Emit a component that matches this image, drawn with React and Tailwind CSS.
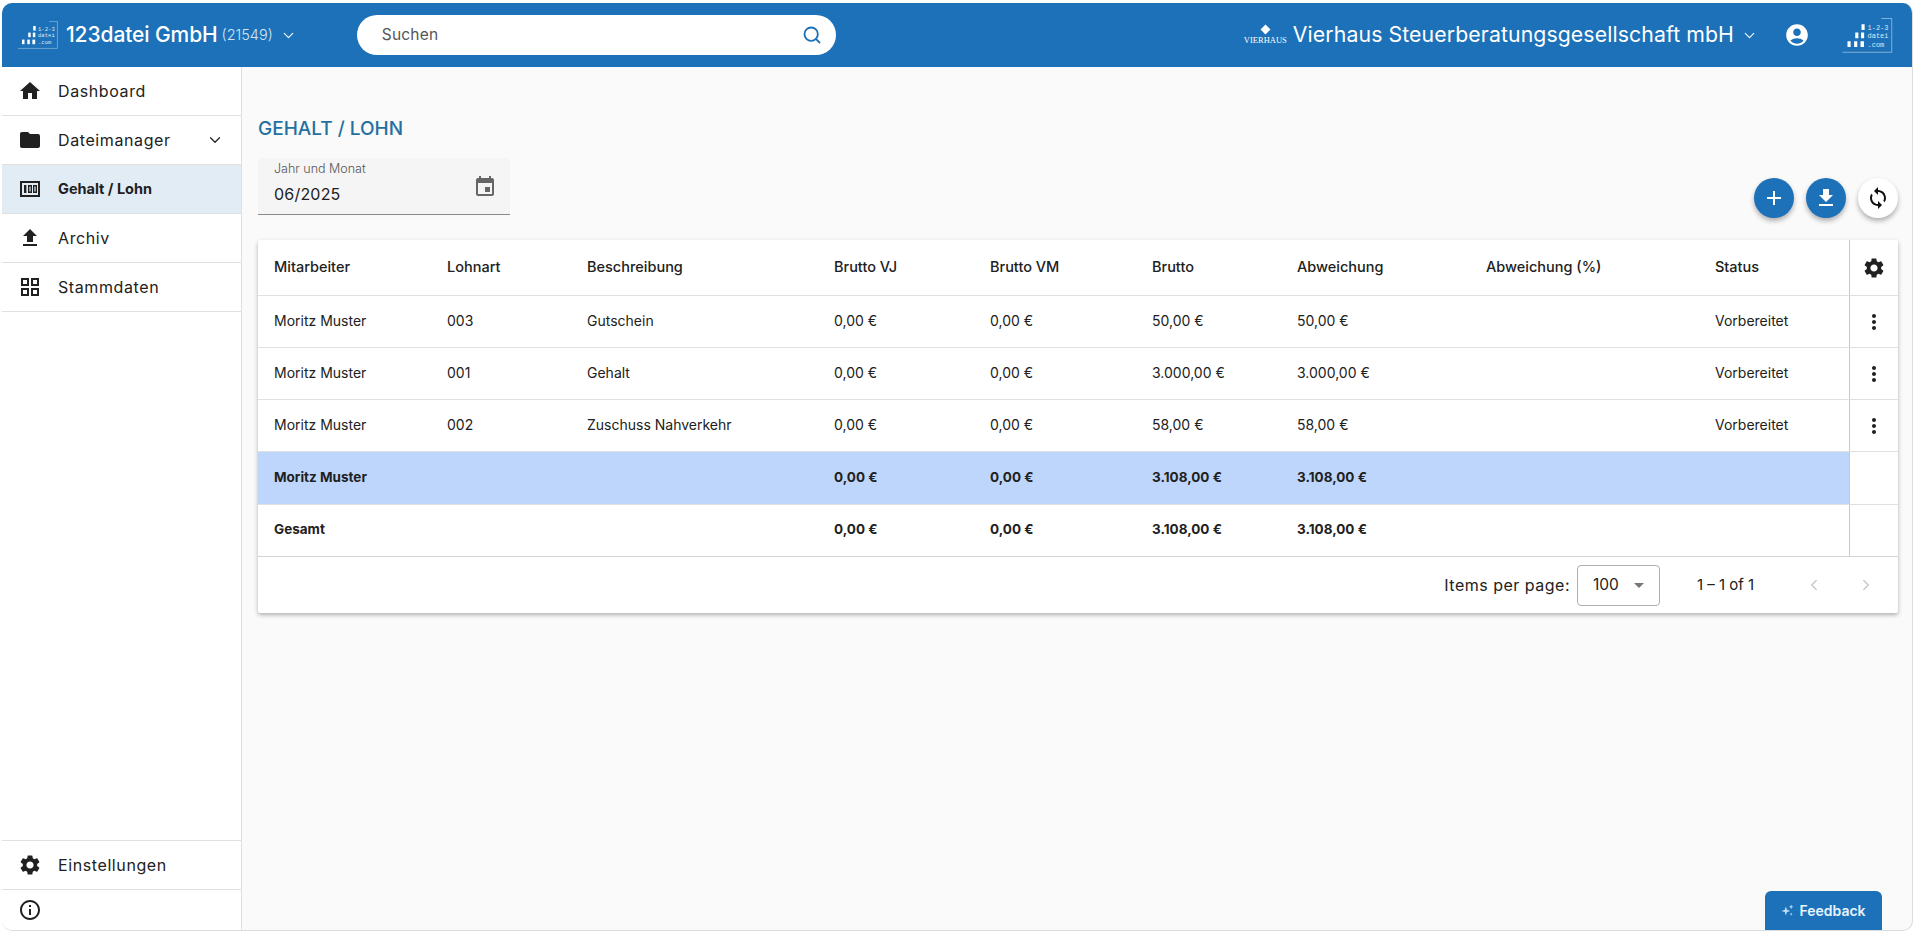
import React from "react";
import { MdHome, MdFolder, MdFileUpload, MdGridView, MdSettings, MdInfoOutline, MdAccountCircle, MdEvent, MdAdd, MdFileDownload, MdSync, MdMoreVert, MdArrowDropDown } from "react-icons/md";
import { ChevronDown, ChevronLeft, ChevronRight, Search } from "lucide-react";

const GRID = "grid grid-cols-[173px_140px_247px_156px_162px_145px_189px_229px_150px_49px]";

function Logo({ className }) {
  return (
    <svg viewBox="0 0 40 28" className={className} fill="#fff">
      <path d="M31 0.4 H39.4 V27.4 H0" fill="none" stroke="#fff" strokeOpacity="0.6" strokeWidth="0.6" />
      <rect x="15.2" y="5" width="2.5" height="4.6" />
      <rect x="10.2" y="11.6" width="2.5" height="4.6" />
      <rect x="14.8" y="11.6" width="2.5" height="4.6" />
      <rect x="4" y="18.6" width="2.5" height="4.6" />
      <rect x="9.3" y="18.6" width="2.5" height="4.6" />
      <rect x="14.4" y="18.6" width="2.8" height="4.6" />
      <text x="20" y="9.6" fontSize="5.6" fillOpacity="0.85" fontFamily="Liberation Mono, monospace">1-2-3</text>
      <text x="20" y="16.2" fontSize="5.6" fillOpacity="0.85" fontFamily="Liberation Mono, monospace">datei</text>
      <text x="20" y="23.2" fontSize="5.6" fillOpacity="0.85" fontFamily="Liberation Mono, monospace">.com</text>
    </svg>
  );
}

function PayIcon({ className }) {
  return (
    <svg viewBox="0 0 24 24" className={className} fill="currentColor">
      <path fillRule="evenodd" d="M2 4 H22 V20 H2 Z M4 6 V18 H20 V6 Z" />
      <rect x="6" y="8" width="2.4" height="8" />
      <path fillRule="evenodd" d="M10 8 H14 V16 H10 Z M11.4 9.6 V14.4 H12.6 V9.6 Z" />
      <path fillRule="evenodd" d="M15 8 H19 V16 H15 Z M16.4 9.6 V14.4 H17.6 V9.6 Z" />
    </svg>
  );
}

function NavItem({ icon: Icon, label, active, chevron }) {
  return (
    <div className={`flex h-[49px] items-center border-b border-[#e0e0e0] pl-[16px] pr-[17px] ${active ? "bg-[#e2ecf5]" : "bg-white"}`}>
      <Icon className="h-6 w-6 shrink-0 text-[#212121]" />
      <span className={`ml-[16px] flex-1 text-[#212121] ${active ? "text-[14.5px] font-bold" : "text-[16px] tracking-[0.6px]"}`}>{label}</span>
      {chevron && <ChevronDown className="h-[18px] w-[18px] text-[#212121]" strokeWidth={1.6} />}
    </div>
  );
}

const rows = [
  ["Moritz Muster", "003", "Gutschein", "0,00 €", "0,00 €", "50,00 €", "50,00 €", "", "Vorbereitet"],
  ["Moritz Muster", "001", "Gehalt", "0,00 €", "0,00 €", "3.000,00 €", "3.000,00 €", "", "Vorbereitet"],
  ["Moritz Muster", "002", "Zuschuss Nahverkehr", "0,00 €", "0,00 €", "58,00 €", "58,00 €", "", "Vorbereitet"],
];
const head = ["Mitarbeiter", "Lohnart", "Beschreibung", "Brutto VJ", "Brutto VM", "Brutto", "Abweichung", "Abweichung (%)", "Status"];
const sumRow = ["Moritz Muster", "", "", "0,00 €", "0,00 €", "3.108,00 €", "3.108,00 €", "", ""];
const totalRow = ["Gesamt", "", "", "0,00 €", "0,00 €", "3.108,00 €", "3.108,00 €", "", ""];

function Cells({ data }) {
  return data.map((c, i) => (
    <div key={i} className="flex items-center pb-[2px] pl-4 whitespace-nowrap">{c}</div>
  ));
}

export default function App() {
  return (
    <div className="h-[933px] w-[1917px] overflow-hidden bg-white pb-[2px] pl-[2px] pr-[4px] pt-[3px] font-['Inter',sans-serif] text-[#212121]">
      <div className="relative flex h-full flex-col overflow-hidden rounded-[10px] border-b border-r border-[#dcdcdc] bg-[#fafafa]">
        <header className="flex h-[64px] shrink-0 items-center bg-[#1c71b8] text-white">
          <Logo className="ml-[16px] h-[28px] w-[40px]" />
          <span className="ml-[8px] text-[21px] font-medium tracking-[-0.1px]">123datei GmbH</span>
          <span className="ml-[4px] text-[14.5px] font-light text-[#d5e5f3]">(21549)</span>
          <ChevronDown className="ml-[7px] h-[17px] w-[17px]" strokeWidth={1.6} />
          <div className="ml-[60px] flex h-[40px] w-[479px] items-center rounded-full bg-white pl-[25px] pr-[14px]">
            <span className="flex-1 text-[15.5px] tracking-[0.2px] text-[#555]">Suchen</span>
            <Search className="h-[20px] w-[20px] text-[#1c71b8]" strokeWidth={2.2} />
          </div>
          <div className="ml-auto flex items-center">
            <div className="flex w-[39px] flex-col items-center">
              <div className="h-[7px] w-[7px] rotate-45 bg-white" />
              <span className="mt-[3px] font-['Liberation_Serif',serif] text-[8.5px] leading-[9px] whitespace-nowrap">VIERHAUS</span>
            </div>
            <span className="ml-[8px] text-[21.25px] tracking-[0.1px] whitespace-nowrap">Vierhaus Steuerberatungsgesellschaft mbH</span>
            <ChevronDown className="ml-[7px] h-[17px] w-[17px]" strokeWidth={1.6} />
            <MdAccountCircle className="ml-[26px] h-[26px] w-[26px]" />
            <Logo className="ml-[32px] mr-[19px] h-[35px] w-[51px]" />
          </div>
        </header>

        <div className="flex min-h-0 flex-1">
          <aside className="flex w-[240px] shrink-0 flex-col justify-between border-r border-[#e0e0e0] bg-white">
            <nav>
              <NavItem icon={MdHome} label="Dashboard" />
              <NavItem icon={MdFolder} label="Dateimanager" chevron />
              <NavItem icon={PayIcon} label="Gehalt / Lohn" active />
              <NavItem icon={MdFileUpload} label="Archiv" />
              <NavItem icon={MdGridView} label="Stammdaten" />
            </nav>
            <div className="border-t border-[#e0e0e0]">
              <NavItem icon={MdSettings} label="Einstellungen" />
              <div className="flex h-[40px] items-center pl-[16px]">
                <MdInfoOutline className="h-6 w-6 text-[#212121]" />
              </div>
            </div>
          </aside>

          <main className="min-w-0 flex-1 pl-[16px] pt-[49px]">
            <h1 className="text-[19px] leading-[26px] font-medium text-[#24709f]">GEHALT / LOHN</h1>
            <div className="mt-[16px] flex w-[1640px] items-start justify-between">
              <div className="relative h-[57px] w-[252px] rounded-t border-b border-[#8a8a8a] bg-[#f5f5f5] pl-[16px] pt-[3px]">
                <div className="text-[12.5px] leading-[16px] font-light text-[#555]">Jahr und Monat</div>
                <div className="mt-[5px] text-[16px] leading-[24px] tracking-[0.2px] text-[#212121]">06/2025</div>
                <MdEvent className="absolute right-[13px] top-[17px] h-[24px] w-[24px] text-[#666]" />
              </div>
              <div className="mt-[20px] flex gap-[12px]">
                <button className="flex h-[40px] w-[40px] items-center justify-center rounded-full bg-[#1c71b8] text-white shadow-[0_3px_5px_rgba(0,0,0,0.3)]"><MdAdd className="h-6 w-6" /></button>
                <button className="flex h-[40px] w-[40px] items-center justify-center rounded-full bg-[#1c71b8] text-white shadow-[0_3px_5px_rgba(0,0,0,0.3)]"><MdFileDownload className="h-6 w-6" /></button>
                <button className="flex h-[40px] w-[40px] items-center justify-center rounded-full bg-white text-[#111] shadow-[0_3px_5px_rgba(0,0,0,0.3)]"><MdSync className="h-6 w-6" /></button>
              </div>
            </div>

            <section className="mt-[22px] w-[1640px] rounded-[2px] bg-white shadow-[0_2px_4px_rgba(0,0,0,0.3)]">
              <div className={`${GRID} h-[56px] border-b border-[#e0e0e0] text-[14.5px] font-medium`}>
                <Cells data={head} />
                <div className="flex items-center justify-center border-l border-[#c8c8c8]"><MdSettings className="h-6 w-6" /></div>
              </div>
              {rows.map((r, i) => (
                <div key={i} className={`${GRID} h-[52px] border-b border-[#e0e0e0] text-[14px]`}>
                  <Cells data={r} />
                  <div className="flex items-center justify-center border-l border-[#c8c8c8]"><MdMoreVert className="h-6 w-6" /></div>
                </div>
              ))}
              <div className={`${GRID} h-[53px] border-b border-[#e0e0e0] text-[13.5px] font-bold`}>
                <div className="col-span-9 grid grid-cols-subgrid bg-[#bed6fb]"><Cells data={sumRow} /></div>
                <div className="border-l border-[#c8c8c8]" />
              </div>
              <div className={`${GRID} h-[52px] border-b border-[#d4d4d4] text-[13.5px] font-bold`}>
                <Cells data={totalRow} />
                <div className="border-l border-[#c8c8c8]" />
              </div>
              <div className="flex h-[56px] items-center justify-end">
                <span className="text-[16px] tracking-[0.5px]">Items per page:</span>
                <div className="ml-[7px] flex h-[41px] w-[83px] items-center rounded border border-[#b0b0b0] pl-[15px] pr-[8px] text-[15.5px]">
                  <span className="flex-1">100</span>
                  <MdArrowDropDown className="h-6 w-6 text-[#777]" />
                </div>
                <span className="ml-[37px] w-[59px] whitespace-nowrap text-[15px]">1 – 1 of 1</span>
                <ChevronLeft className="ml-[49px] h-[18px] w-[18px] text-[#c4c4c4]" strokeWidth={1.6} />
                <ChevronRight className="ml-[34px] mr-[23px] h-[18px] w-[18px] text-[#c4c4c4]" strokeWidth={1.6} />
              </div>
            </section>
          </main>
        </div>

        <button className="absolute bottom-0 right-[30px] flex h-[39px] w-[117px] items-center justify-center gap-[5px] rounded-t-[6px] bg-[#1c71b8] text-[14px] font-semibold text-[#e6f4ff]">
          <svg viewBox="0 0 16 16" className="h-[13px] w-[13px]" fill="#bcdcf5">
            <path d="M6 3 L7.4 7.1 L11.5 8.5 L7.4 9.9 L6 14 L4.6 9.9 L0.5 8.5 L4.6 7.1 Z" />
            <path d="M12.5 0.5 L13.3 2.7 L15.5 3.5 L13.3 4.3 L12.5 6.5 L11.7 4.3 L9.5 3.5 L11.7 2.7 Z" />
            <path d="M12.5 10.5 L13.1 12 L14.5 12.5 L13.1 13 L12.5 14.5 L11.9 13 L10.5 12.5 L11.9 12 Z" />
          </svg>
          Feedback
        </button>
      </div>
    </div>
  );
}
